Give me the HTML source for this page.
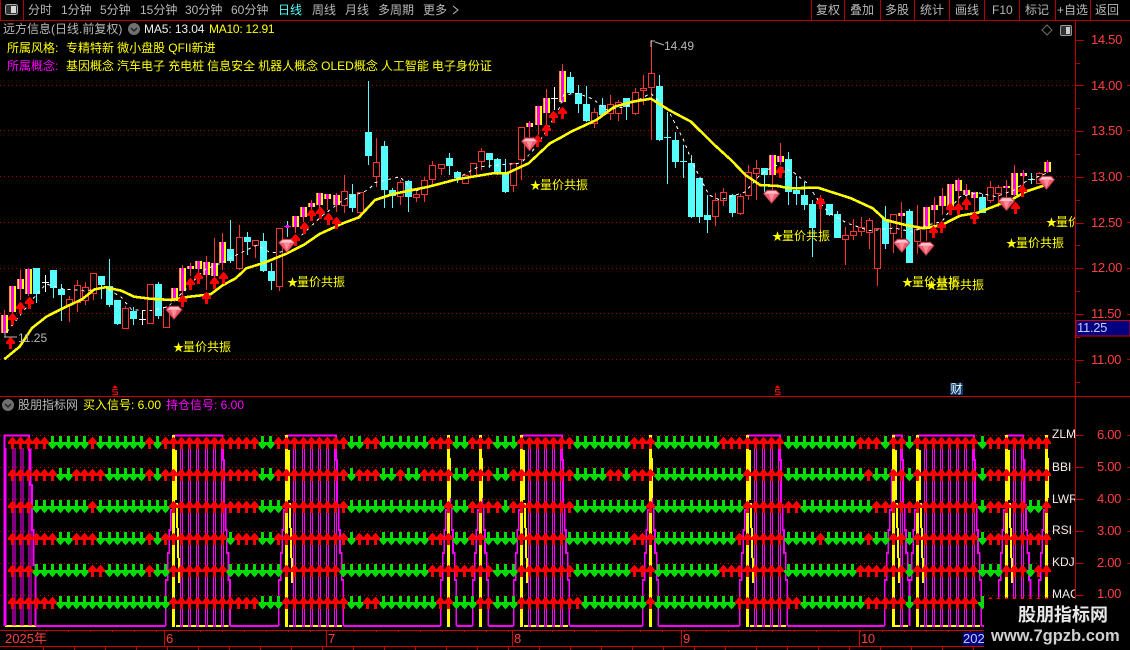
<!DOCTYPE html>
<html lang="zh">
<head>
<meta charset="utf-8">
<title>远方信息</title>
<style>
html,body{margin:0;padding:0;background:#000;}
#p{position:relative;width:1130px;height:650px;overflow:hidden;background:#000;font-family:"Liberation Sans","WenQuanYi Zen Hei","Noto Sans CJK SC",sans-serif;font-size:12px;color:#b8b8b8;}
#p svg{position:absolute;left:0;top:0;}
.t{position:absolute;white-space:nowrap;line-height:16px;height:16px;}
.g{color:#b8b8b8}.y{color:#ffff00}.m{color:#ff00ff}.w{color:#f0f0f0}.r{color:#ff4040;font-size:13px;letter-spacing:-.3px}.c{color:#54fcfc}
.z{position:absolute;white-space:nowrap;overflow:hidden;line-height:16px;height:16px;color:#ffff00;}
.z b{font-weight:normal;font-size:11px;display:inline-block;width:10px;}
</style>
</head>
<body>
<div id="p">
<svg id="s" width="1130" height="650" viewBox="0 0 1130 650" xmlns="http://www.w3.org/2000/svg"></svg>

<div class="t g" style="left:28px;top:2px">分时</div>
<div class="t g" style="left:61px;top:2px">1分钟</div>
<div class="t g" style="left:100px;top:2px">5分钟</div>
<div class="t g" style="left:140px;top:2px">15分钟</div>
<div class="t g" style="left:185px;top:2px">30分钟</div>
<div class="t g" style="left:231px;top:2px">60分钟</div>
<div class="t c" style="left:278px;top:2px">日线</div>
<div class="t g" style="left:312px;top:2px">周线</div>
<div class="t g" style="left:345px;top:2px">月线</div>
<div class="t g" style="left:378px;top:2px">多周期</div>
<div class="t g" style="left:423px;top:2px">更多</div>
<div class="t g" style="left:816px;top:2px">复权</div>
<div class="t g" style="left:850px;top:2px">叠加</div>
<div class="t g" style="left:885px;top:2px">多股</div>
<div class="t g" style="left:920px;top:2px">统计</div>
<div class="t g" style="left:955px;top:2px">画线</div>
<div class="t g" style="left:992px;top:2px">F10</div>
<div class="t g" style="left:1025px;top:2px">标记</div>
<div class="t g" style="left:1057px;top:2px">+自选</div>
<div class="t g" style="left:1095px;top:2px">返回</div>

<div class="t g" style="left:3px;top:21px;font-size:12px">远方信息(日线.前复权)</div>
<div class="t w" style="left:144px;top:21px;letter-spacing:-.1px">MA5: 13.04</div>
<div class="t y" style="left:209px;top:21px;letter-spacing:-.25px">MA10: 12.91</div>
<div class="t y" style="left:7px;top:40px">所属风格:</div>
<div class="t y" style="left:66px;top:40px;word-spacing:-.2px">专精特新 微小盘股 QFII新进</div>
<div class="t m" style="left:7px;top:58px">所属概念:</div>
<div class="t y" style="left:66px;top:58px;word-spacing:-.3px">基因概念 汽车电子 充电桩 信息安全 机器人概念 OLED概念 人工智能 电子身份证</div>

<div class="t g" style="left:664px;top:38px">14.49</div>
<div class="t g" style="left:18px;top:330px">11.25</div>

<div class="z" style="left:173px;top:339px;width:60px"><b>★</b>量价共振</div>
<div class="z" style="left:287px;top:274px;width:60px"><b>★</b>量价共振</div>
<div class="z" style="left:530px;top:177px;width:60px"><b>★</b>量价共振</div>
<div class="z" style="left:772px;top:228px;width:60px"><b>★</b>量价共振</div>
<div class="z" style="left:902px;top:274px;width:60px"><b>★</b>量价共振</div>
<div class="z" style="left:926px;top:277px;width:60px"><b>★</b>量价共振</div>
<div class="z" style="left:1006px;top:235px;width:60px"><b>★</b>量价共振</div>
<div class="z" style="left:1046px;top:214px;width:29px"><b>★</b>量价共振</div>

<div class="t r" style="left:1091px;top:32px">14.50</div>
<div class="t r" style="left:1091px;top:78px">14.00</div>
<div class="t r" style="left:1091px;top:123px">13.50</div>
<div class="t r" style="left:1091px;top:169px">13.00</div>
<div class="t r" style="left:1091px;top:215px">12.50</div>
<div class="t r" style="left:1091px;top:260px">12.00</div>
<div class="t r" style="left:1091px;top:306px">11.50</div>
<div class="t r" style="left:1091px;top:352px">11.00</div>
<div class="t" style="left:1077px;top:320px;color:#c8c8ff;font-size:13px;letter-spacing:-.3px">11.25</div>

<div class="t" style="left:950px;top:381px;color:#fff;width:13px;text-align:center">财</div>

<div class="t g" style="left:18px;top:397px">股朋指标网</div>
<div class="t y" style="left:83px;top:397px">买入信号: 6.00</div>
<div class="t m" style="left:166px;top:397px">持仓信号: 6.00</div>

<div class="t r" style="left:1097px;top:427px">6.00</div>
<div class="t r" style="left:1097px;top:459px">5.00</div>
<div class="t r" style="left:1097px;top:491px">4.00</div>
<div class="t r" style="left:1097px;top:523px">3.00</div>
<div class="t r" style="left:1097px;top:555px">2.00</div>
<div class="t r" style="left:1097px;top:586px">1.00</div>

<div class="z w" style="left:1052px;top:426px;width:23px;color:#f0f0f0">ZLM</div>
<div class="z w" style="left:1052px;top:459px;width:23px;color:#f0f0f0">BBI</div>
<div class="z w" style="left:1052px;top:491px;width:23px;color:#f0f0f0">LWR</div>
<div class="z w" style="left:1052px;top:522px;width:23px;color:#f0f0f0">RSI</div>
<div class="z w" style="left:1052px;top:554px;width:23px;color:#f0f0f0">KDJ</div>
<div class="z w" style="left:1052px;top:586px;width:23px;color:#f0f0f0">MACD</div>

<div class="t r" style="left:5px;top:631px;letter-spacing:0">2025年</div>
<div class="t r" style="left:166px;top:631px">6</div>
<div class="t r" style="left:328px;top:631px">7</div>
<div class="t r" style="left:514px;top:631px">8</div>
<div class="t r" style="left:683px;top:631px">9</div>
<div class="t r" style="left:861px;top:631px">10</div>
<div class="z" style="left:963px;top:631px;width:21px;font-size:13px;color:#c8c8ff;">2025</div>

<div style="position:absolute;left:984px;top:599px;width:146px;height:51px;background:#000">
  <div style="position:absolute;left:34px;top:5px;white-space:nowrap;font-weight:bold;font-size:18px;line-height:22px;color:#e8e8e8">股朋指标网</div>
  <div style="position:absolute;left:7px;top:27px;white-space:nowrap;font-weight:bold;font-size:16.5px;line-height:20px;color:#d0d0d0">www.7gpzb.com</div>
</div>
</div>

<script>
var o=[];
function L(x1,y1,x2,y2,c,w,ex){o.push('<line x1="'+x1+'" y1="'+y1+'" x2="'+x2+'" y2="'+y2+'" stroke="'+c+'" stroke-width="'+(w||1)+'" '+(ex||'')+'/>');}
function R(x,y,w,h,f,ex){o.push('<rect x="'+x+'" y="'+y+'" width="'+w+'" height="'+h+'" fill="'+f+'" '+(ex||'')+'/>');}
function P(d,c,w,ex){o.push('<path d="'+d+'" fill="none" stroke="'+c+'" stroke-width="'+w+'" '+(ex||'')+'/>');}
function F(d,c,ex){o.push('<path d="'+d+'" fill="'+c+'" '+(ex||'')+'/>');}
var DR='#b40000',CR='shape-rendering="crispEdges"';
function X(i){return 4.6+8.083*i;}

/* frame */
R(0,20,1130,1,DR,CR);
R(0,0,1,20,DR,CR);R(23,0,1,20,DR,CR);
[811,844,880,914,949,984,1019,1055,1090].forEach(function(x){R(x,0,1,20,DR,CR);});
R(0,396,1130,1,'#d00000',CR);
R(0,630,1130,1,'#d00000',CR);
R(0,646,1130,1,'#d00000',CR);
R(1075,20,1,610,'#c00000',CR);
/* toolbar icons */
o.push('<rect x="5.5" y="4.5" width="12" height="10" rx="2" fill="#333" stroke="#aaa"/>');R(11,6,5,7,'#d8d8d8');
P('M453 6l5 4-5 4','#b8b8b8',1);
o.push('<path d="M1047 25l5 5-5 5-5-5z" fill="none" stroke="#707070"/>');
o.push('<rect x="1060.5" y="25.5" width="11" height="10" rx="1.5" fill="#333" stroke="#999"/>');R(1066,27,4,7,'#ccc');
/* header circles */
function circ(x,y){o.push('<circle cx="'+x+'" cy="'+y+'" r="6" fill="#707070"/>');P('M'+(x-3)+' '+(y-1)+'l3 3 3-3','#222',1.4);}
circ(134,29);circ(8,405);

/* axis ticks */
for(var k=0;k<19;k++){var yy=Math.round(39.7+k*22.85);if(yy<392)R(1076,yy,k%2?4:8,1,DR,CR);}
[435,467,499,531,563,595].forEach(function(y){R(1076,y,8,1,DR,CR);});
[85,130,176,222,268,314,359,435,467,499,531,563].forEach(function(y){R(1127,y,3,1,DR,CR);});

/* dotted */
[85.5,130.5,176.5,222.5,268.5,313.5,359.5,435.5,467.5,499.5,531.5,563.5,595.5].forEach(function(y){L(0,y,1075,y,'#a80000',1,'stroke-dasharray="1 3"');});

/* candles */
var C=[
['s',315,332.7,310,333],['s',286,311.7,286,313],['s',279,289,270,300],['s',269,294,268,296],['c',268,294,268,302.7],['d',281.7,281.7,275,291.7],['c',270,287.7,270,298],['c',289,295,284,320.7],['r',299.3,304.3,296,321.7],['r',285.3,301.7,280,311.7],
['r',286.7,300,281.7,305],['r',273,293,273,300],['c',276,285,276,299],['c',286,305,259,306.7],['c',300,324,300,325],['r',308.3,328.3,306,329],['c',311,319,306.7,325],['d',319.3,319.3,310,325],['r',284,322.7,284,324],['c',284,315.7,282,319],
['r',306.7,326.7,306,327],['s',288,301,288,302],['s',268.3,290.7,265,295],['s',265.7,269,263,276],['s',261,269,261,275],['s',262,275,256,290],['s',263,276,237.7,278],['s',242,262.7,233,270],['c',249,260.7,220,263],['r',237.3,268.3,225,270],
['c',237,242,231.7,255],['r',240.3,245,240,258],['c',241,270.7,232.7,272],['c',271,281,263,290],['r',228.3,286,228,290.7],['m',225.7,225.7,221,236.7],['s',216,227,216,233],['s',207,216.7,207,222],['s',203.3,207,200,212],['s',193,205,193,215],
['s',194,199,194,210],['s',195,205,193,212],['r',190.7,205,175,213],['c',194,208,184,211.7],['r',192,212,192,214],['c',131.7,156,81,165],['r',162.3,176,138.3,186.7],['c',146,190,141,208],['c',190,196,188,208],['r',181.7,195.7,180,205],
['c',181,196.7,180,211.7],['r',194.3,196.7,190,202],['r',180.3,194.3,177,202],['r',165,179.3,161,185],['r',164.3,168.3,164,175],['c',158,166,153,175],['c',172.3,178.3,170.7,182.7],['r',175.3,182.7,175,184],['r',163.3,175.7,163,177],['r',151,161,148,170],
['c',153,160,153,168.3],['c',158.7,172,158,175],['c',174.3,191.7,159,193],['r',163.3,185.3,163,191.7],['r',127.3,159.3,127,180],['s',123.3,126.7,120.7,136.7],['s',106,124.7,106,135],['s',98,113.3,89.3,124.3],['d',98,98,87.3,110],['s',71,101.7,64,103],
['c',77.3,93.3,71.7,94],['c',92.7,104,85,113],['c',104,121,86,122],['r',112.3,123.3,108,127.7],['c',105,115,98,117],['r',104.3,113.3,95,120],['r',101.7,113.3,100,120.7],['c',98.3,107.3,98,120],['r',91.7,112.7,88,115],['r',88.3,89.7,75,105],
['r',73.3,86.7,40,140],['c',86,140,75,141],['c',136.7,137.7,111.7,184],['c',140,161.7,132.3,168.3],['c',160.7,161.7,145,178.3],['c',163.3,216.7,155,218],['c',178.3,216.7,178,222.7],['c',215,220,195,233.3],['r',200,215.7,193,225.7],['r',192.3,200,188,206],
['c',195,212.7,194,217.3],['r',195.7,213.3,194,215],['r',171.7,195,165,200],['r',168.3,172.7,160,200],['c',168.3,175,168,195],['s',155,175,155,190],['s',156,162.3,143.3,165],['c',159,191.7,152.3,205],['c',190,194,176,205],['c',195,205,181.7,210],
['c',204,228.3,200,257],['r',199,200.5,195,241.7],['c',204,215,204,216],['c',214,237.7,211,238],['r',235,239,226.7,265],['r',231.3,234.7,219,240],['r',227.3,230.7,216.7,236],['r',220,231.7,218.3,249],['r',228.3,268.3,228,285.7],['c',219.3,244,206,249],
['r',214.3,233.3,214,252.7],['s',213,215.7,202.3,238.3],['c',211,262.7,209,263],['r',229.3,240.7,205,254],['s',207,229.3,207,240.7],['s',205,209.7,197,225],['s',196,206,188,215],['s',184,207,184,210],['s',180,190.7,178,203],['s',190,195,184,207],
['s',192,198.3,192,218],['c',197,212.7,194,213],['r',187.3,200,181,203],['r',187.3,192.7,185,207],['s',186,187.7,180,199],['s',173,195,165,196],['s',172.7,175.7,170,190],['c',179,180,173.3,184],['r',173.3,182.7,172,183],['s',162,172,160,173.3]
];
var RC='#ff3232',CC='#54fcfc';
C.forEach(function(c,i){
 var x=X(i),t=c[0],a=Math.round(x-.5),l=a-3,bt=Math.round(c[1]),bb=Math.round(c[2]);
 var wc=(t=='c')?CC:(t=='d'?'#fff':(t=='m'?CC:RC));
 R(a,Math.round(c[3]),1,Math.round(c[4])-Math.round(c[3]),wc,CR);
 if(t=='d'||t=='m'){R(l,bt,7,1,t=='m'?'#ff00ff':'#fff',CR);if(t=='m')R(a-1,bt-1,3,3,'#ff00ff',CR);return;}
 if(bb-bt<1)bb=bt+1;
 if(t=='c')R(l,bt,7,bb-bt,CC,CR);
 else if(t=='r'){o.push('<rect x="'+(l+.5)+'" y="'+(bt+.5)+'" width="6" height="'+(bb-bt)+'" fill="#000" stroke="'+RC+'" '+CR+'/>');}
 else{R(l,bt,7,bb-bt,'#ffff00',CR);R(l+2,bt,3,bb-bt,'#ff00ff',CR);R(l,bt,1,bb-bt,'#ff8a3c',CR);}
});

/* MA5 dashed */
P('M7 331.7L18 318L36 295L46 284L64 289L86 291L104 287L121 297L132 310L150 310.7L168 306.7L186 289L204 270L221 263L243 251.7L257 245L271 253L282 251.7L300 236.7L321 216.7L343 200L368 190L375 182.7L400 176.7L414 191.7L432 185L457 178.3L478.6 166.7L500 165L521 163L532 151.7L546 131.7L560 106.7L563.6 95L578 93.3L592.7 99L607 110L625.5 106.7L651 93.3L669 111.7L683.6 140L692.7 163.3L709 195L720 200L745 192L760 175L775 165L793 172L807 183L818 200L829 213L847 223L869 230.7L894.5 228L912.7 232L927 225L942 221.7L954.5 203.3L960 196.7L978 192.7L996 196.7L1014.5 190L1025.5 181.7L1047 173','#fff',1,'stroke-dasharray="3 4" '+CR);
/* MA10 */
P('M4.3 359.3L19.6 346.7L32 328L46.4 316.7L60.7 309.3L82 299.3L94.6 289.3L105.4 287.3L121.4 290.7L134 296.7L150 298.7L171.4 300L189 296.7L210.7 294.3L223 285L235.7 278.3L246.4 268.3L264.3 262.7L285.7 254L303.6 245L319.6 234L342.9 223.3L359 217.3L375 200L392.9 194L428.6 186.7L457 179.3L493 173.3L507 173.3L528.6 163.3L550 143.3L560 138L571 131.7L596.4 120L614.5 106.7L632.7 101.7L651 98.7L669 110L691 121.7L712.7 143.3L731 160L745.5 175L760 185L778 186L789 188.3L818 187.7L851 198.3L872.7 208.3L885.5 220L905.5 225L923.6 228.3L941.8 225L960 215.7L978 212.7L1000 204L1011 200L1025.5 191.7L1045.5 185','#ffff00',2.6,'stroke-linejoin="round" '+CR);

/* arrow helpers: fat, stepped heads like the reference */
function upPath(a,top){return 'M'+a+' '+top+'H'+(a+1)+'L'+(a+5)+' '+(top+5)+'V'+(top+7)+'H'+(a+2)+'V'+(top+12)+'H'+(a-1)+'V'+(top+7)+'H'+(a-4)+'V'+(top+5)+'Z';}
function dnPath(a,top){return 'M'+(a-1)+' '+top+'H'+(a+2)+'V'+(top+6)+'H'+(a+5)+'V'+(top+8)+'L'+(a+1)+' '+(top+13)+'H'+a+'L'+(a-4)+' '+(top+8)+'V'+(top+6)+'H'+(a-1)+'Z';}

/* upper arrows */
[[10,337],[12.9,312.7],[20.7,301.7],[29,296.7],[182,295],[190,277.7],[198.6,271.7],[206.8,292.3],[214.7,276.7],[223,271.7],[295.7,234.3],[304,221.7],[311.8,209.3],[320,207.3],[328,212.7],[336,216.7],[537.5,135],[546,124],[553.6,110.7],[562,106.7],[780,165.7],[820,197],[933.8,226],[941.8,220.7],[950,202.7],[958,202.7],[966,198],[974,211.7],[1015,201.7],[1022.5,185]].forEach(function(a){F(upPath(Math.round(a[0]-.5),Math.round(a[1])),'#ff0000',CR);});

/* rubies */
function ruby(x,y){
 F('M'+(x-8)+' '+(y-3)+'L'+(x-4.5)+' '+(y-6.5)+'H'+(x+4.5)+'L'+(x+8)+' '+(y-3)+'L'+x+' '+(y+6.5)+'Z','#f25a6e','stroke="#b83a4a" stroke-width=".8"');
 F('M'+(x-7)+' '+(y-3)+'L'+(x-4)+' '+(y-5.7)+'H'+(x+4)+'L'+(x+7)+' '+(y-3)+'Z','#ffc2c8');
 F('M'+(x-3)+' '+(y-3)+'H'+(x+3)+'L'+x+' '+(y+5)+'Z','#ff8c98');
}
[[174,312.7],[286.8,245.7],[529.6,144.3],[771.6,196.7],[901.8,245.7],[926,248.7],[1046.5,182.7],[1006.5,204]].forEach(function(a){ruby(a[0],a[1]);});

/* markers */
P('M651 47V41H655M655 42L664 45','#b8b8b8',1);
P('M5 331V337H9M4 337H17','#b8b8b8',1);
function smark(x){F('M'+x+' 385l2.5 3h-5z','#ff0000');P('M'+(x+2.5)+' 389.5H'+(x-2)+'V392H'+(x+2.5)+'V394.5H'+(x-2.5),'#ff0000',1.2,CR);}
smark(115);smark(777.5);
R(950,383,13,12,'#0a3a6a');

/* current price box */
o.push('<rect x="1076" y="320.5" width="54" height="15.5" fill="#000080" stroke="#d00000"/>');
R(963,632,21,13.5,'#000080');

/* date ticks */
[164,326,512,681,859].forEach(function(x){R(x,630,1,16,'#d00000',CR);});
for(var q=0;q<50;q++){R(Math.round(24+q*22),630,1,2,'#d00000',CR);R(Math.round(43+q*31),646,1,4,'#d00000',CR);}

/* lower panel */
var MG='#ff00ff',YL='#ffff00',base=626;
var regs=[[174,222.7,22,27],[287,336,36,41],[449,449],[481,481],[522,562,65,69],[651,651],[748,780,93,96],[893,902,111,111],[918,974,114,120],[1007,1023.3,125,126]];
function sr(xl,xr,leftOnly){
 var d='M'+(xl-8.3)+' '+base+'V580H'+(xl-6.3)+'V553H'+(xl-4.7)+'V530H'+(xl-3.3)+'V510H'+(xl-1.3)+'V470H'+xl+'V435.5';
 if(!leftOnly)d+='H'+xr+'V460H'+(xr+1.3)+'V505H'+(xr+2.7)+'V530H'+(xr+4)+'V553H'+(xr+5.7)+'V580H'+(xr+7.3)+'V'+base;
 return d;
}
/* base magenta */
var prev=36;
regs.forEach(function(r){R(prev,625,r[0]-8.3-prev,2,MG,CR);prev=r[1]+7.3;});
R(prev,625,990-prev,2,MG,CR);
/* region A */
R(5,625,31,2,YL,CR);
P('M4.5 626V435.5H29V450H30.5V485H32V530H33.5V565H35.5V626',MG,1.6,CR);
[5,12,14,20,22,28,30].forEach(function(x){R(x+.5,448,1,178,MG,CR);});
/* regions */
regs.forEach(function(r){
 if(r[2]){R(r[0]+2,625,r[1]+4-r[0],2,YL,CR);for(var c=r[2];c<=r[3];c++){var a=Math.round(X(c)-1.1);R(a-1,448,1,179,MG,CR);R(a+1,448,1,179,MG,CR);R(a-1,625,3,2,MG,CR);}}
 P(sr(r[0],r[1]),MG,1.8,CR);
});
P(sr(1047,1047,true),MG,1.8,CR);
/* yellow bars */
[21,35,55,59,64,80,92,110,113,124,129].forEach(function(c,i){
 var a=Math.round(X(c)-1.1);
 R(a-1,435,3,192,YL,CR);
 if(i==0||i==1||i==4||i==6||i==7||i==8||i==9){
  R(a-1,450,5,50,YL,CR);
  R(a+3,503,2,25,YL,CR);R(a+4,528,2,30,YL,CR);R(a+5,558,2,25,YL,CR);
 } else {R(a-1,458,4,40,YL,CR);}
});

/* lower arrows */
var rows=[
[[1,5],[11,11],[18,18],[20,31],[34,42],[45,46],[53,55],[58,60],[64,70],[78,80],[89,96],[106,108],[110,111],[113,120],[122,129]],
[[1,6],[9,12],[18,18],[20,31],[34,42],[44,46],[49,49],[52,55],[58,60],[63,70],[75,76],[78,80],[92,96],[107,107],[110,111],[113,120],[122,129]],
[[1,3],[11,11],[21,31],[35,42],[55,55],[58,61],[63,70],[80,80],[92,98],[108,120],[122,126],[129,129]],
[[1,6],[9,11],[18,18],[20,27],[29,31],[34,42],[44,46],[53,55],[58,59],[64,69],[78,80],[91,96],[101,101],[107,107],[110,111],[113,120],[122,129]],
[[1,3],[11,12],[18,18],[21,27],[35,41],[53,60],[64,70],[78,80],[89,96],[106,111],[113,120],[124,126],[128,129]],
[[1,6],[21,31],[35,42],[45,46],[54,55],[59,60],[64,71],[80,80],[91,98],[107,111],[113,120],[122,129]]
];
var dn='',up='';
rows.forEach(function(r,ri){
 var top=437+32*ri;
 for(var c=1;c<=129;c++){
  var isU=r.some(function(a){return c>=a[0]&&c<=a[1];}),a=Math.round(X(c)-1.1);
  if(isU)up+=upPath(a,top);else dn+=dnPath(a,top-1);
 }
});
F(dn,'#00dc00',CR);F(up,'#ff0000',CR);

document.getElementById('s').innerHTML=o.join('');
</script>
</body>
</html>
